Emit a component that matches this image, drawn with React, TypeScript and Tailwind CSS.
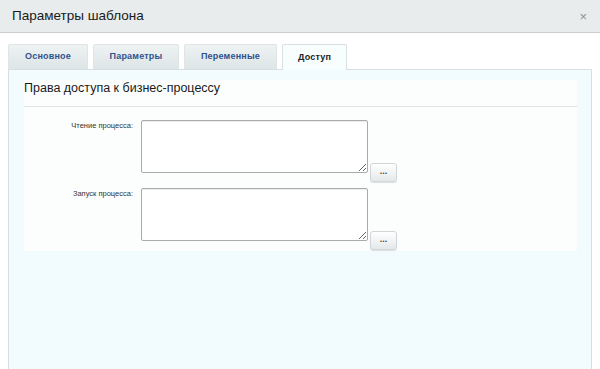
import React from 'react';

const tabs = [
  { label: 'Основное', w: 'w-[80px]' },
  { label: 'Параметры', w: 'w-[86px]' },
  { label: 'Переменные', w: 'w-[93px]' },
];

function PermissionRow({ label }: { label: string }) {
  return (
    <div className="flex items-start">
      <div className="w-[109px] pt-[1px] text-right text-[7.5px] leading-[10px] text-[#333]">{label}</div>
      <textarea className="ml-[8px] h-[53px] w-[227px] resize-y rounded-[2px] border border-[#a9acae] bg-white shadow-[inset_0_1px_1px_rgba(0,0,0,0.08)]" />
      <button className="ml-[2px] mt-[43px] flex h-[19px] w-[27px] items-center justify-center rounded-[3px] border border-[#d2d6d8] bg-gradient-to-b from-white to-[#e4e8ea] pb-[3px] text-[9px] font-bold leading-none text-[#444] shadow-[0_1px_1px_rgba(0,0,0,0.12)]">
        ...
      </button>
    </div>
  );
}

export default function App() {
  return (
    <div className="flex h-[369px] w-[600px] flex-col overflow-hidden bg-white font-['Liberation_Sans',Arial,sans-serif]">
      <div className="flex h-[33px] shrink-0 items-center justify-between border-b border-[#c9cdcd] bg-[#e8ecec] pl-[12px] pr-[13px]">
        <span className="text-[13.5px] text-[#1a1a1a]">Параметры шаблона</span>
        <span className="text-[13px] leading-none text-[#8c9091]">×</span>
      </div>

      <div className="mt-[11px] flex gap-[5px] pl-[8px]">
        {tabs.map((t) => (
          <div
            key={t.label}
            className={`${t.w} flex h-[25px] items-center justify-center rounded-t-[2px] border border-b-0 border-[#dfe4e5] bg-gradient-to-b from-[#eef2f3] to-[#dde5e7] text-[9px] font-bold tracking-[0.2px] text-[#2f528d]`}
          >
            {t.label}
          </div>
        ))}
        <div className="relative z-10 -mb-px flex h-[26px] w-[65px] items-start justify-center rounded-t-[2px] border border-b-0 border-[#d9e0e1] bg-[#f8fdfe] pt-[6px] text-[9px] font-bold tracking-[0.2px] text-[#222]">
          Доступ
        </div>
      </div>

      <div className="mx-[8px] flex flex-1 flex-col border border-b-0 border-[#d8dfe0] bg-[#f2fbfd] pl-[15px] pr-[14px] pt-[10px]">
        <div className="bg-[#fcfefe] pb-[1px]">
          <div className="h-[27px] border-b border-[#e1e4e4] text-[12.5px] leading-[16px] text-[#1a1a1a]">
            Права доступа к бизнес-процессу
          </div>
          <div className="flex flex-col gap-[6px] pt-[13px]">
            <PermissionRow label="Чтение процесса:" />
            <PermissionRow label="Запуск процесса:" />
          </div>
        </div>
      </div>
    </div>
  );
}
